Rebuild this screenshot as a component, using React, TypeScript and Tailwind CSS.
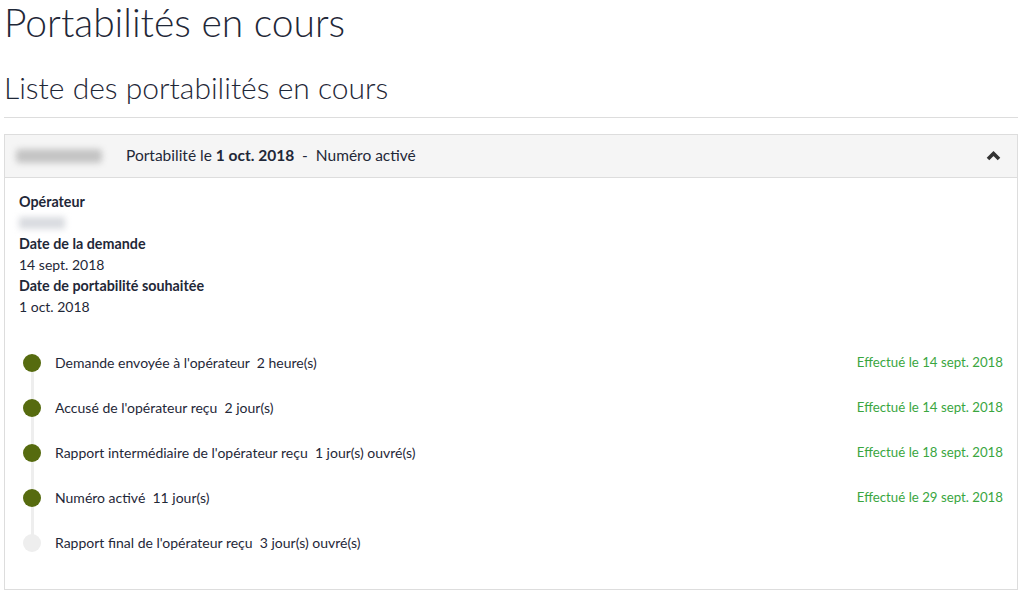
type Step = { label: string; delay: string; done?: string };

const steps: Step[] = [
  { label: "Demande envoyée à l'opérateur", delay: "2 heure(s)", done: "Effectué le 14 sept. 2018" },
  { label: "Accusé de l'opérateur reçu", delay: "2 jour(s)", done: "Effectué le 14 sept. 2018" },
  { label: "Rapport intermédiaire de l'opérateur reçu", delay: "1 jour(s) ouvré(s)", done: "Effectué le 18 sept. 2018" },
  { label: "Numéro activé", delay: "11 jour(s)", done: "Effectué le 29 sept. 2018" },
  { label: "Rapport final de l'opérateur reçu", delay: "3 jour(s) ouvré(s)" },
];

export default function App() {
  return (
    <div className="min-h-[593px] bg-white px-[4px] text-[#1f2838] [font-family:Lato,'Liberation_Sans',sans-serif]">
      <h1 className="pt-[1px] text-[39px] font-light leading-[42px]">Portabilités en cours</h1>
      <h2 className="mt-[26px] text-[30px] font-light leading-[36px]">Liste des portabilités en cours</h2>
      <div className="mt-[12px] h-px bg-[#dddddd]" />

      <div className="mt-[16px] border border-[#dddddd] bg-white">
        <div className="flex h-[43px] items-center border-b border-[#dddddd] bg-[#f5f5f5] pl-[11px] pr-[16px] text-[15.5px]">
          <div className="h-[14px] w-[86px] rounded-sm bg-[#c4c4c4] blur-[3px]" />
          <div className="ml-[24px] flex-1">
            Portabilité le <b>1 oct. 2018</b>&nbsp; - &nbsp;Numéro activé
          </div>
          <svg width="15" height="11" viewBox="0 0 15 11" className="mb-[2px]">
            <polyline
              points="2,9 7.5,3.5 13,9"
              fill="none"
              stroke="#333333"
              strokeWidth="3.6"
              strokeLinejoin="miter"
            />
          </svg>
        </div>

        <div className="px-[14px] pb-[24px] pt-[13px] text-[14px] leading-[21px]">
          <div className="text-[14.3px] font-bold">Opérateur</div>
          <div className="flex h-[21px] items-center">
            <div className="h-[12px] w-[46px] bg-[#d9dbe0] blur-[3px]" />
          </div>
          <div className="text-[14.3px] font-bold">Date de la demande</div>
          <div>14 sept. 2018</div>
          <div className="text-[14.3px] font-bold">Date de portabilité souhaitée</div>
          <div>1 oct. 2018</div>

          <div className="relative mt-[23px]">
            <div className="absolute left-[11.5px] top-[22px] bottom-[22px] w-[3px] bg-[#eeeeee]" />
            {steps.map((s) => (
              <div key={s.label} className="relative flex h-[45px] items-center">
                <div
                  className={
                    s.done
                      ? "ml-[4px] h-[18px] w-[18px] rounded-full bg-[#566b0f]"
                      : "ml-[4px] h-[18px] w-[18px] rounded-full bg-[#eeeeee]"
                  }
                />
                <div className="ml-[14px] flex-1">
                  {s.label}&nbsp; {s.delay}
                </div>
                {s.done ? <div className="text-[13.25px] text-[#3aa63f]">{s.done}</div> : null}
              </div>
            ))}
          </div>
        </div>
      </div>
    </div>
  );
}
